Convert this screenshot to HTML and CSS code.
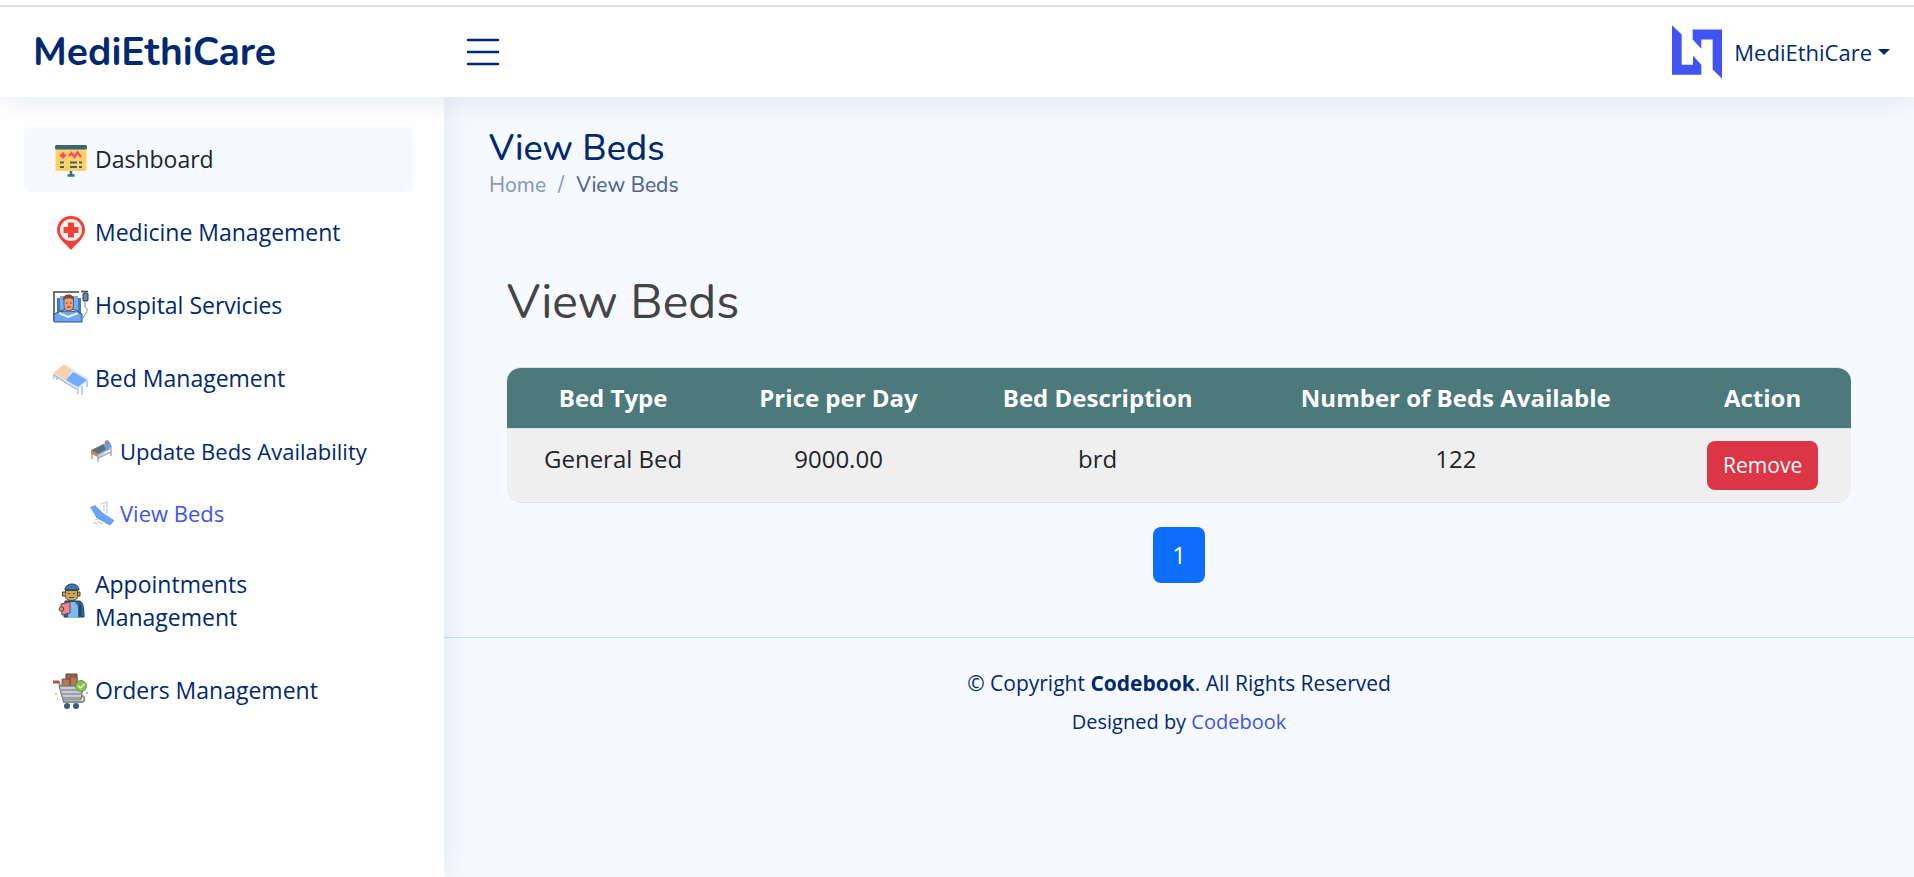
FILE: index.html
```html
<!DOCTYPE html>
<html lang="en">
<head>
<meta charset="utf-8">
<title>View Beds - MediEthiCare</title>
<link rel="stylesheet" href="styles.css">
</head>
<body>
<header class="header">
  <div class="brand">
    <a class="logo" href="#">MediEthiCare</a>
    <button class="toggle" type="button" aria-label="Toggle sidebar">
      <svg width="34" height="30" viewBox="0 0 34 30" fill="none" stroke="currentColor" stroke-width="2.6" stroke-linecap="round"><path d="M2 3h30M2 15h30M2 27h30"/></svg>
    </button>
  </div>
  <button class="profile" type="button">
    <svg width="50" height="54" viewBox="102 75 150 161" fill="#4154f1"><path d="M102 75l29 28v91h34v-27l25 27v30h-88zM164 88h88v148l-28-28v-90h-34v28l-26-28z"/></svg>
    <span>MediEthiCare</span>
    <i class="caret"></i>
  </button>
</header>
<div class="layout">
  <nav class="sidebar" aria-label="Main">
    <ul class="nav">
      <li><a class="nav-link current" href="#">
        <svg class="icon" viewBox="0 0 36 36"><rect x="2.500" y="4" width="31" height="25" rx="1.500" fill="#ffd166"/><rect x="2" y="3" width="32" height="4.500" rx="1.500" fill="#3b6478"/><path d="M7 13.500h6M10 10.500v6" stroke="#f9476a" stroke-width="2.600"/><path d="M16 14l2.500-3 3 4 3-4.500L28 15" fill="none" stroke="#f9476a" stroke-width="2.200"/><path d="M7 20.500h4M17 20.500h7M26 20.500h3M7 25h4M17 25h7M26 25h3" stroke="#3b6478" stroke-width="2.200"/><path d="M18 29v4M14.500 33.500h7" stroke="#3b6b91" stroke-width="2.500"/></svg>
        <span>Dashboard</span></a></li>
      <li><a class="nav-link" href="#">
        <svg class="icon" viewBox="0 0 36 36"><path d="M18 1C10 1 4 7 4 15c0 8 8 13 14 20 6-7 14-12 14-20C32 7 26 1 18 1z" fill="#f44336"/><circle cx="18" cy="15" r="11" fill="#f3f1f1"/><path d="M15 7.500h6v4.500h4.500v6H21v4.500h-6V18h-4.500v-6H15z" fill="#f44336"/></svg>
        <span>Medicine Management</span></a></li>
      <li><a class="nav-link" href="#">
        <svg class="icon" viewBox="0 0 36 36"><path d="M1 33V4h25M28 3.500h7" fill="none" stroke="#444" stroke-width="1.500"/><path d="M4 10h24v22H4z" fill="#3f78cf"/><path d="M7 8h18v14H7z" fill="#75aef4"/><path d="M6 26c1-4 6-5 10-5s9 1 10 5" fill="#eceff4" stroke="#334"/><path d="M11 9h9.500v9c0 3-2 5-5 5s-4.500-2-4.500-5z" fill="#e9a278" stroke="#444" stroke-width=".8"/><path d="M10 12.500c-1-8 12-8 11 0-3-3-7-3-11 0z" fill="#7f4933"/><path d="M13 15h1.500M17 15h1.500M14 19h3.500" stroke="#433"/><path d="M1 26c8-4 20-4 28 0v8H1z" fill="#69a7fa" stroke="#394d6a"/><path d="M6 25l9 4 10-4" fill="none" stroke="#eef" stroke-width="2"/><rect x="30" y="5" width="5" height="8" rx="1" fill="#5f8cb8" stroke="#333"/><path d="M32 14v5c5 3 0 6-2 11" fill="none" stroke="#888"/></svg>
        <span>Hospital Servicies</span></a></li>
      <li><a class="nav-link" href="#">
        <svg class="icon" viewBox="0 0 36 36"><path d="M1 13v5M4 15v4M1 14l22 14 12-10M25 27v6M29 25v9M34 19v7" fill="none" stroke="#b4bed2" stroke-width="1.500"/><path d="M0 12L11 3l25 15-11 10z" fill="#dfe5f0"/><path d="M1 12L11 4l8 5-6 10z" fill="#f9cfad"/><path d="M13 19l7-8 14 8-9 7z" fill="#70abff"/></svg>
        <span>Bed Management</span></a>
        <ul class="subnav">
          <li><a class="sub-link" href="#">
            <svg class="icon-small" viewBox="0 0 24 24"><path d="M2 15v5M8 17v6M21 9v8M8 19l13-6" stroke="#a9a9c3" stroke-width="1.500"/><path d="M1 12l14-8 7 5-13 9z" fill="#c7c8de"/><path d="M1 11l13-6 4 5-11 6z" fill="#5b7180"/><path d="M1 11l7 4v3l-7-3z" fill="#c48b5d"/><path d="M14 6l6-3 2 5-5 4z" fill="#6fa3df"/><circle cx="17" cy="3.500" r="2.200" fill="#a7808b"/></svg>
            <span>Update Beds Availability</span></a></li>
          <li><a class="sub-link active" href="#">
            <svg class="icon-small" viewBox="0 0 24 24"><path d="M11 3l6-2v12M14 4v6M5 19l9-3M7 20l6 3M3 21l4 2" fill="none" stroke="#c4ccda" stroke-width="1.300"/><path d="M0 6l5-2 8 8 11 7-4 5-14-8z" fill="#69a5f7"/><path d="M6 16l14 8 4-5" fill="none" stroke="#5d8bcc"/></svg>
            <span>View Beds</span></a></li>
        </ul></li>
      <li><a class="nav-link" href="#">
        <svg class="icon" viewBox="0 0 36 36"><path d="M12 7c0-8 14-8 14 0z" fill="#3a77bb" stroke="#333"/><path d="M12.500 7.500h12v6c0 3-3 4-6 4s-6-1-6-4z" fill="#d3a15e" stroke="#443"/><path d="M12 9H9.500v4H13M25 9h2v4h-2" fill="#d3a15e" stroke="#443"/><path d="M15 10.500h2M20 10.500h2M16 14.500h5" stroke="#554"/><path d="M12 18h14c3 0 5 4 5 16H11z" fill="#2d6296" stroke="#293c50"/><path d="M15 19h7l3 4v12H15z" fill="#7eb9eb"/><path d="M8 21l9-2v11l-8 2z" fill="#f08592" stroke="#63444f"/><circle cx="8.500" cy="26" r="2.300" fill="#d3a15e" stroke="#443"/><path d="M27 22v11" stroke="#222"/></svg>
        <span>Appointments Management</span></a></li>
      <li><a class="nav-link" href="#">
        <svg class="icon" viewBox="0 0 36 36"><path d="M13 1h11v13H13z" fill="#9a6549" stroke="#52443e"/><path d="M9 6h8v8H9zM17 4h7v10h-7z" fill="#b47857" stroke="#65483c" stroke-width=".8"/><path d="M1 9h5l5 20h18c3 0 3-6 0-6" fill="none" stroke="#8a8e93" stroke-width="2"/><path d="M0 9h6" stroke="#bd4757" stroke-width="3"/><path d="M6 13h24l-2 14H10z" fill="#c8ccd1" stroke="#666b72"/><path d="M7 17h22M8 21h21M9 25h19" stroke="#8b8f96" stroke-width="1.500"/><circle cx="28" cy="13" r="5.500" fill="#8bc34a" stroke="#5f7f3b" stroke-width=".8"/><path d="M25 12.500l2.500 2.500 4-4" fill="none" stroke="#e4f3d2" stroke-width="1.500"/><circle cx="14" cy="33" r="3" fill="#3c5a83"/><circle cx="23" cy="33" r="3" fill="#3c5a83"/><path d="M2 21h2M4 26h1" stroke="#f6c76b" stroke-width="2"/><path d="M33 20h2" stroke="#87c8f2" stroke-width="2"/></svg>
        <span>Orders Management</span></a></li>
    </ul>
  </nav>
  <div class="content">
    <main class="main">
      <h1 class="page-title">View Beds</h1>
      <nav class="breadcrumb" aria-label="Breadcrumb"><a href="#">Home</a><span class="slash">/</span><span class="here">View Beds</span></nav>
      <section class="beds">
        <h2 class="section-title">View Beds</h2>
        <div class="table-wrap">
          <table class="table">
            <thead><tr><th>Bed Type</th><th>Price per Day</th><th>Bed Description</th><th>Number of Beds Available</th><th>Action</th></tr></thead>
            <tbody><tr><td>General Bed</td><td>9000.00</td><td>brd</td><td>122</td><td><button class="remove" type="button">Remove</button></td></tr></tbody>
          </table>
        </div>
        <div class="pagination"><a class="page" href="#">1</a></div>
      </section>
    </main>
    <footer class="footer">
      <p class="copyright">© Copyright <strong>Codebook</strong>. All Rights Reserved</p>
      <p class="credits">Designed by <a href="#">Codebook</a></p>
    </footer>
  </div>
</div>
</body>
</html>
```

FILE: styles.css
```css
* { box-sizing: border-box; }
body {
  margin: 0;
  min-height: 100vh;
  display: flex;
  flex-direction: column;
  border-top: 5px solid #fff;
  background: #f6f9ff;
  color: #212529;
  font: 24px/36px "Open Sans", "Noto Sans", sans-serif;
}
a { color: #4154f1; text-decoration: none; }
button { font: inherit; border: 0; background: none; cursor: pointer; }
h1, h2, p, ul { margin: 0; padding: 0; }
ul { list-style: none; }

.header {
  position: relative;
  z-index: 2;
  display: flex;
  align-items: center;
  justify-content: space-between;
  height: 92px;
  padding: 0 24px 0 33px;
  border-top: 2px solid #e0e0e0;
  background: #fff;
  box-shadow: 0 3px 30px rgba(1, 41, 112, 0.1);
}
.brand { display: flex; align-items: center; }
.logo {
  width: 433px;
  padding-top: 2px;
  color: #012970;
  font: 700 39px/48px Nunito, Lato, sans-serif;
}
.toggle { display: flex; padding: 0; color: #012970; }
.profile {
  display: flex;
  align-items: center;
  gap: 12px;
  padding: 0;
  color: #012970;
  font-size: 22px;
  font-weight: 500;
  line-height: 32px;
}
.caret {
  margin-left: -6px;
  border: 6px solid transparent;
  border-top-color: currentColor;
  border-bottom: 0;
}

.layout { display: flex; flex: 1; }
.sidebar {
  position: relative;
  flex: 0 0 444px;
  padding: 30px 30px 30px 24px;
  background: #fff;
  box-shadow: 0 0 30px rgba(1, 41, 112, 0.1);
}
.nav { display: flex; flex-direction: column; gap: 8px; }
.nav-link {
  display: flex;
  align-items: center;
  gap: 6px;
  padding: 16px 29px;
  border-radius: 6px;
  color: #012970;
  font-size: 23px;
  font-weight: 500;
  line-height: 33px;
}
.current { background: #f6f9ff; color: #212529; }
.icon { flex: none; width: 36px; height: 36px; margin: -2px 0; }
.subnav { padding: 9px 0 0 66px; }
.sub-link {
  display: flex;
  align-items: center;
  gap: 6px;
  padding: 15px 0;
  color: #012970;
  font-size: 22px;
  font-weight: 500;
  line-height: 32px;
}
.active { color: #4154f1; }
.icon-small { flex: none; width: 24px; height: 24px; }

.content { flex: 1; min-width: 0; }
.main { padding: 31px 45px 0; }
.page-title {
  color: #012970;
  font: 500 36px/41px Nunito, Lato, sans-serif;
}
.breadcrumb {
  display: flex;
  gap: 12px;
  color: #899bbd;
  font: 500 21px/32px Nunito, Lato, sans-serif;
}
.breadcrumb a { color: #899bbd; }
.here { color: #51678f; }
.beds { padding: 71px 18px 54px; }
.section-title {
  margin-bottom: 35px;
  color: #444;
  font: 400 48px/60px Nunito, Lato, sans-serif;
}
.table-wrap {
  overflow: hidden;
  border-top: 1px solid #dee2e6;
  border-radius: 14px;
}
.table { width: 100%; border-collapse: collapse; text-align: center; }
.table th, .table td {
  padding: 12px;
  border-bottom: 1px solid #dee2e6;
  vertical-align: top;
}
.table th { background: #4b797c; color: #fff; font-weight: 700; }
.table td { background: #efefef; }
.remove {
  display: block;
  margin: 0 auto;
  padding: 8px 16px;
  border-radius: 8px;
  background: #dc3545;
  color: #fff;
  font-size: 21px;
  line-height: 33px;
}
.pagination { display: flex; justify-content: center; padding-top: 24px; }
.page {
  padding: 10px 19px;
  border-radius: 8px;
  background: #0d6efd;
  color: #fff;
}
.footer {
  padding: 29px 0;
  border-top: 1px solid #cddfff;
  color: #012970;
  text-align: center;
}
.copyright { font-size: 21px; line-height: 32px; }
.credits { padding-top: 8px; font-size: 20px; line-height: 30px; }
```
